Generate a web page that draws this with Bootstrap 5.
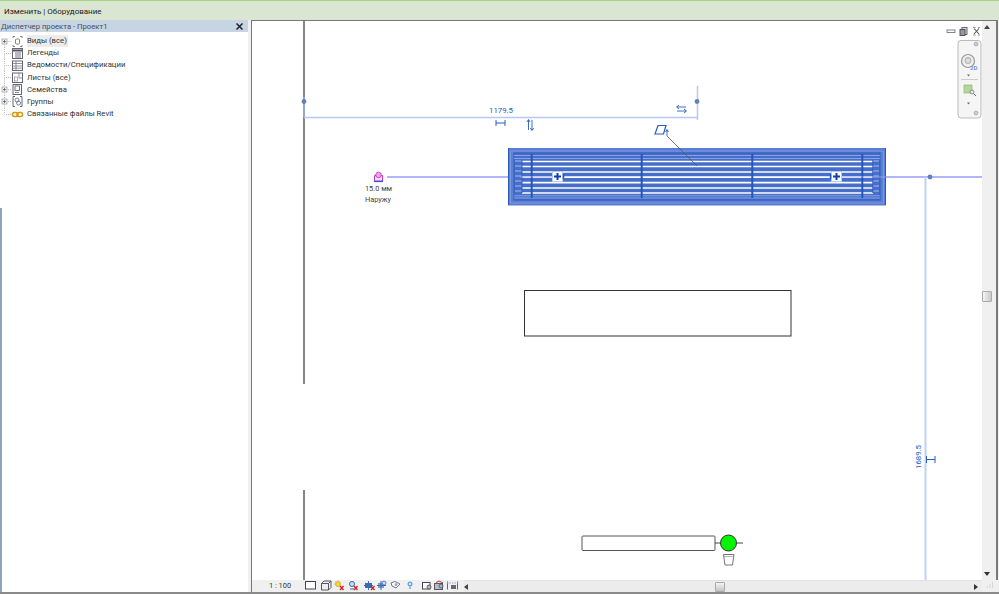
<!DOCTYPE html>
<html lang="ru">
<head>
<meta charset="utf-8">
<title>Revit</title>
<link href="https://cdn.jsdelivr.net/npm/bootstrap@5.3.0/dist/css/bootstrap.min.css" rel="stylesheet">
<style>
html,body{height:100%;overflow:hidden;background:#f0f0f0}
body{font-family:Roboto,"Noto Sans",sans-serif;font-size:8px;color:#333}
.app-root{width:999px;height:594px}
.top-line{height:1px;background:#9fd77f}
.ribbon-bar{height:19px;background:#dae6d2;font-size:8px;padding-left:4px;color:#222;line-height:21px}
.main-area{height:572px}
.tree-side{width:248px;background:#fff linear-gradient(#8fa6bf,#8fa6bf) no-repeat 0 188px/2px 100%}
.tree-head{height:12px;background:#c6d4e3;color:#45505c;font-size:7.7px;line-height:11px;padding:0 5px 0 1px}
.tree-list{padding:3px 0 0;margin:0;list-style:none}
.tree-row{height:12.17px;line-height:12px;font-size:7.75px;color:#333}
.tree-row svg{width:27px;height:13px;flex:none}
.sel-label{background:#ececec;padding-right:1px}
.side-gap{width:3px;background:#f0f0f0}
.view-frame{width:747px;border-left:1px solid #777;border-top:1px solid #777;background:#f0f0f0}
.draw-row{height:559px}
.draw-area{width:730px;height:559px;background:#fff;display:block;flex:none}
.v-scroll{width:15px;background:#f0f0f0}
.thumb-v{width:10px;height:11px;margin-top:262px;background:linear-gradient(90deg,#f4f4f4,#c9c9c9);border:1px solid #aaa;border-radius:1px}
.status-row{height:12px;background:#f0f0f0;font-size:7.4px;color:#333;line-height:12px}
.scale-text{width:52px;padding-left:17px;flex:none}
.status-svg{width:160px;height:12px;flex:none}
.h-track{width:518px;background:#ececec;border-top:1px solid #e2e2e2}
.thumb-h{width:10px;height:10px;margin-left:247px;background:linear-gradient(#f4f4f4,#c4c4c4);border:1px solid #aaa;border-radius:1px}
.end-edge{width:2px;background:#7a7a7a}
.foot-edge{height:2px;background:#8a8a8a}
.dim-text{font-size:7.8px;fill:#2a5bc0;font-family:Roboto,sans-serif}
.note-text{font-size:7.4px;fill:#444;font-family:Roboto,sans-serif}
</style>
</head>
<body>
<div class="app-root d-flex flex-column">
  <div class="top-line"></div>
  <div class="ribbon-bar">Изменить | Оборудование</div>
  <div class="main-area d-flex">
    <div class="tree-side d-flex flex-column">
      <div class="tree-head d-flex justify-content-between align-items-center">
        <span>Диспетчер проекта - Проект1</span>
        <svg width="7" height="7" viewBox="0 0 7 7"><path d="M0.5 0.5L6.5 6.5M6.5 0.5L0.5 6.5" stroke="#222" stroke-width="1.5"/></svg>
      </div>
      <ul class="tree-list">
        <li class="tree-row d-flex align-items-center">
          <svg viewBox="0 0 27 13"><path d="M4.5 6.5H12M4.500 6.5V13" fill="none" stroke="#bbb" stroke-dasharray="1 1"/><rect x="2" y="4" width="5" height="5" fill="#f4f4f4" stroke="#999" stroke-width=".7"/><path d="M3 6.5H6M4.5 5V8" stroke="#456" stroke-width=".7"/><path d="M13 3V1.500H15M20 1.500H22V3M22 10V11.500H20M15 11.500H13V10" fill="none" stroke="#666" stroke-width=".8"/><rect x="15.500" y="4" width="4" height="5" rx="1" fill="none" stroke="#777" stroke-width=".9"/></svg>
          <span class="sel-label">Виды (все)</span>
        </li>
        <li class="tree-row d-flex align-items-center">
          <svg viewBox="0 0 27 13"><path d="M4.5 0V6.5H12M4.500 6.5V13" fill="none" stroke="#bbb" stroke-dasharray="1 1"/><rect x="12.500" y="1.500" width="10" height="10" fill="#fff" stroke="#667"/><path d="M13 3.500H22" stroke="#556" stroke-width="2"/><path d="M15 6H21M15 8H21M15 10H21" stroke="#667" stroke-width=".9"/></svg>
          <span>Легенды</span>
        </li>
        <li class="tree-row d-flex align-items-center">
          <svg viewBox="0 0 27 13"><path d="M4.5 0V6.5H12M4.500 6.5V13" fill="none" stroke="#bbb" stroke-dasharray="1 1"/><rect x="12.500" y="2" width="10" height="9.500" fill="#fff" stroke="#667"/><path d="M13 4.500H22M13 7H22M13 9.200H22M16 2V11" fill="none" stroke="#778" stroke-width=".8"/></svg>
          <span>Ведомости/Спецификации</span>
        </li>
        <li class="tree-row d-flex align-items-center">
          <svg viewBox="0 0 27 13"><path d="M4.5 0V6.5H12M4.500 6.5V13" fill="none" stroke="#bbb" stroke-dasharray="1 1"/><rect x="12.500" y="2" width="10" height="9.500" fill="#fff" stroke="#667"/><path d="M19 2V7H22.500" fill="none" stroke="#778" stroke-width=".8"/><rect x="14.500" y="6" width="3" height="4" fill="none" stroke="#889" stroke-width=".7"/></svg>
          <span>Листы (все)</span>
        </li>
        <li class="tree-row d-flex align-items-center">
          <svg viewBox="0 0 27 13"><path d="M4.5 0V6.5H12M4.500 6.5V13" fill="none" stroke="#bbb" stroke-dasharray="1 1"/><rect x="2" y="4" width="5" height="5" fill="#f4f4f4" stroke="#999" stroke-width=".7"/><path d="M3 6.5H6M4.5 5V8" stroke="#456" stroke-width=".7"/><rect x="13" y="1.500" width="8.500" height="10" fill="#fff" stroke="#667"/><rect x="15" y="3" width="4.500" height="4.500" fill="none" stroke="#667" stroke-width=".9"/><path d="M15 9.500H19" stroke="#889"/></svg>
          <span>Семейства</span>
        </li>
        <li class="tree-row d-flex align-items-center">
          <svg viewBox="0 0 27 13"><path d="M4.5 0V6.5H12M4.500 6.5V13" fill="none" stroke="#bbb" stroke-dasharray="1 1"/><rect x="2" y="4" width="5" height="5" fill="#f4f4f4" stroke="#999" stroke-width=".7"/><path d="M3 6.5H6M4.5 5V8" stroke="#456" stroke-width=".7"/><path d="M15 1.500H13V11.500H15M20 1.500H22V11.500H20" fill="none" stroke="#667"/><circle cx="17" cy="5" r="2" fill="none" stroke="#778" stroke-width=".9"/><circle cx="18.500" cy="8" r="2" fill="none" stroke="#778" stroke-width=".9"/></svg>
          <span>Группы</span>
        </li>
        <li class="tree-row d-flex align-items-center">
          <svg viewBox="0 0 27 13"><path d="M4.5 0V6.5H12" fill="none" stroke="#bbb" stroke-dasharray="1 1"/><rect x="12.500" y="4.500" width="5.500" height="4" rx="2" fill="none" stroke="#d59b12" stroke-width="1.600"/><rect x="17" y="4.500" width="5.500" height="4" rx="2" fill="none" stroke="#d59b12" stroke-width="1.600"/></svg>
          <span>Связанные файлы Revit</span>
        </li>
      </ul>
    </div>
    <div class="side-gap"></div>
    <div class="view-frame d-flex flex-column">
      <div class="draw-row d-flex">
        <svg class="draw-area" viewBox="252 21 730 559" aria-label="Чертёж">
          <!-- walls -->
          <path d="M304 21V384M304 490V580" stroke="#555" stroke-width="1.400" fill="none"/>
          <path d="M304 97V117" stroke="#9db4ea" stroke-width="1.400"/>
          <!-- horizontal dimension -->
          <path d="M304 117.500H697M697.500 86V120" stroke="#b7c8f5" stroke-width="1.500" fill="none"/>
          <circle cx="304" cy="101.500" r="2.400" fill="#5f83b8"/>
          <circle cx="697" cy="101.500" r="2.400" fill="#5f83b8"/>
          <text class="dim-text" x="489" y="113">1179.5</text>
          <path d="M496 120V126M505 120V126M496 123H505" stroke="#2a5bc0" stroke-width="1" fill="none"/>
          <path d="M528.500 130V120M526.800 122L528.500 119.500L530.200 122M532 120V130M530.300 128L532 130.500L533.700 128" stroke="#2a5bc0" stroke-width=".9" fill="none"/>
          <path d="M677 107H686M679 105L676.500 107L679 109M686 111H677M684 109L686.500 111L684 113" stroke="#2a5bc0" stroke-width=".9" fill="none"/>
          <!-- connection lines -->
          <path d="M387 177H508M886 177H982" stroke="#9a9dfa" stroke-width="1.300"/>
          <path d="M925.500 177V580" stroke="#c0d0f8" stroke-width="2"/>
          <circle cx="930" cy="177" r="2.400" fill="#5f83b8"/>
          <!-- unit -->
          <rect x="508" y="148" width="378" height="57.500" fill="#5a7fd2"/>
          <path d="M508.500 148V205M885.500 148V205" stroke="#2a58bd" stroke-width="1"/>
          <path d="M510.500 151H883.500V203H510.500Z" fill="none" stroke="#86a0e0" stroke-width=".8"/>
          <rect x="514" y="153" width="366" height="47" fill="#466ecb" stroke="#2f5cc2"/>
          <path d="M514 155.500H880M514 158.500H880M514 195.800H880M514 198H880" stroke="#9ab0e6" stroke-width=".8"/>
          <path d="M522 161.500H873M522 166.500H873M522 172H873M522 177.200H873M522 182.700H873M522 188H873M522 193H873" stroke="#fff" stroke-width="1.700"/>
          <path d="M515 161H522M515 166H522M515 171H522M515 176H522M515 181H522M515 186H522M515 191H522M873 161H879M873 166H879M873 171H879M873 176H879M873 181H879M873 186H879M873 191H879" stroke="#a7b9ea" stroke-width="1"/>
          <path d="M522 160V193M872.800 160V193" stroke="#2f5cc2" stroke-width="1"/>
          <path d="M531.700 154V198M641.700 154V198M752.300 154V198M862.300 154V198" stroke="#2456bd" stroke-width="2"/>
          <path d="M520 177H552M842 177H886" stroke="#a5a8fa" stroke-width="1" opacity=".8"/>
          <!-- grip controls -->
          <g>
            <rect x="552.500" y="171.500" width="10" height="10" fill="#fff" stroke="#b8c8ee"/>
            <path d="M557.500 173V180M554 176.500H561" stroke="#0e3fb0" stroke-width="2"/>
            <path d="M563.500 174V179" stroke="#2456bd" stroke-width="1.500"/>
          </g>
          <g>
            <rect x="831.500" y="171.500" width="10" height="10" fill="#fff" stroke="#b8c8ee"/>
            <path d="M836.500 173V180M833 176.500H840" stroke="#0e3fb0" stroke-width="2"/>
            <path d="M830.500 174V179" stroke="#2456bd" stroke-width="1.500"/>
          </g>
          <!-- elevation handle -->
          <path d="M658 125.500H666L663.500 134H655Z" fill="none" stroke="#2a5bc0" stroke-width="1.200"/>
          <path d="M667 136V130M665.500 132L667 129.500L668.500 132" stroke="#2a5bc0" stroke-width=".9" fill="none"/>
          <path d="M667 136L697 166" stroke="#555" stroke-width=".8"/>
          <!-- magenta connector -->
          <path d="M374.500 175.500V181H382.500V175.500Z" fill="#f8e4f8" stroke="#b43ac4" stroke-width="1"/>
          <circle cx="378.500" cy="175" r="2.800" fill="#f0a0e8" stroke="#c030c0" stroke-width=".8"/>
          <path d="M374 181.500H383" stroke="#3a4fd0" stroke-width="1.200"/>
          <text class="note-text" x="378.500" y="191" text-anchor="middle">15.0 мм</text>
          <text class="note-text" x="378" y="202" text-anchor="middle">Наружу</text>
          <!-- boxes -->
          <rect x="524.500" y="290.500" width="266.500" height="45.500" fill="#fff" stroke="#333"/>
          <rect x="582" y="536" width="133" height="14.500" rx="1" fill="#fff" stroke="#555"/>
          <path d="M715 543H720M737 543H743" stroke="#444"/>
          <circle cx="728.500" cy="543" r="8" fill="#00f500" stroke="#333"/>
          <path d="M723.500 554.500H734L732.500 565H725Z" fill="#fff" stroke="#666" stroke-width=".9"/>
          <path d="M723.500 556.500H734" stroke="#888" stroke-width=".6"/>
          <!-- vertical dimension -->
          <text class="dim-text" transform="translate(921 469) rotate(-90)">1689.5</text>
          <path d="M926.500 456V463M935 456V463M926.500 459.500H935" stroke="#2a5bc0" stroke-width="1" fill="none"/>
          <!-- view controls -->
          <rect x="947" y="30" width="8" height="2.500" fill="#fff" stroke="#666" stroke-width=".8"/>
          <rect x="962" y="27.500" width="5" height="7" fill="#ddd" stroke="#556" stroke-width=".9"/>
          <rect x="960" y="29.500" width="5" height="6" fill="#999" stroke="#445" stroke-width=".9"/>
          <path d="M974 28.500L979 34M979 28.500L974 34" stroke="#555" stroke-width="1.100"/>
          <path d="M973 27.500H975.500M978 27.500H980M973 35H975.500M978 35H980" stroke="#777" stroke-width=".8"/>
          <rect x="958" y="40.500" width="23" height="77.500" rx="3" fill="#f5f5f5" stroke="#bbb"/>
          <circle cx="976" cy="44" r="2" fill="#ccc" stroke="#999" stroke-width=".6"/>
          <circle cx="976" cy="113" r="2" fill="#ccc" stroke="#999" stroke-width=".6"/>
          <circle cx="968" cy="61" r="6.500" fill="#eee" stroke="#999" stroke-width="1.200"/>
          <circle cx="968" cy="60.500" r="3" fill="#ddd" stroke="#aaa"/>
          <text x="970" y="70" font-size="6" font-weight="700" fill="#6a97d8" font-family="Roboto,sans-serif">2D</text>
          <path d="M967 74.500H970L968.500 76.500Z" fill="#666"/>
          <path d="M961 79.500H978" stroke="#ccc"/>
          <rect x="964" y="85" width="8" height="8" fill="#b3d89a" stroke="#8db874" stroke-width=".7"/>
          <circle cx="972" cy="92" r="2" fill="#eee" stroke="#777" stroke-width=".8"/>
          <path d="M973.500 93.500L976 96" stroke="#666" stroke-width="1"/>
          <path d="M967 102.500H970L968.500 104.500Z" fill="#666"/>
        </svg>
        <div class="v-scroll d-flex flex-column align-items-center">
          <svg class="mt-1 me-1" width="6" height="4" viewBox="0 0 6 4"><path d="M0 4H6L3 0Z" fill="#444"/></svg>
          <div class="thumb-v me-1"></div>
          <svg class="mt-auto mb-1 me-1" width="6" height="4" viewBox="0 0 6 4"><path d="M0 0H6L3 4Z" fill="#333"/></svg>
        </div>
        <div class="end-edge"></div>
      </div>
      <div class="status-row d-flex">
        <span class="scale-text">1 : 100</span>
        <svg class="status-svg" viewBox="304 580 160 12">
          <rect x="305.500" y="581.500" width="10" height="7.500" fill="#fff" stroke="#445"/>
          <path d="M321.500 583.500H328.500V590H321.500ZM321.500 583.500L324 581H331V587.500L328.500 590M328.500 583.500L331 581" fill="#eee" stroke="#445" stroke-width=".9"/>
          <circle cx="338" cy="584" r="2.500" fill="#f5d547" stroke="#c9a417" stroke-width=".8"/>
          <path d="M338 580.500V581M334.500 584H335M335.500 581.500L336 582" stroke="#c9a417"/>
          <path d="M340 586L343.500 590M343.500 586L340 590" stroke="#d02020" stroke-width="1.300"/>
          <circle cx="352" cy="584" r="2.500" fill="#cde" stroke="#2a6bc0"/>
          <path d="M350 589H354" stroke="#2a6bc0"/>
          <path d="M354 586L357.500 590M357.500 586L354 590" stroke="#d02020" stroke-width="1.300"/>
          <rect x="365" y="583" width="7" height="5" fill="#3a6ab0"/>
          <path d="M364 585.500H373M368.500 581V590" stroke="#3a6ab0"/>
          <path d="M371 586L374.500 590M374.500 586L371 590" stroke="#d02020" stroke-width="1.300"/>
          <rect x="378" y="583" width="6" height="5" fill="#7a9ad0"/>
          <path d="M381 581V590M377 585.500H386" stroke="#3a6ab0"/>
          <circle cx="384" cy="583" r="2" fill="#cde" stroke="#3a6ab0" stroke-width=".8"/>
          <path d="M391 583L395 581.500L400 584L396 588L392 586Z" fill="#fff" stroke="#667" stroke-width=".9"/>
          <circle cx="396" cy="584.500" r="1.500" fill="#9ab"/>
          <circle cx="410" cy="584" r="2" fill="#cfe6ff" stroke="#3a8ad0"/>
          <path d="M410 586.500V589" stroke="#3a8ad0"/>
          <rect x="422.500" y="582.500" width="7.500" height="6.500" fill="#fff" stroke="#445"/>
          <circle cx="429" cy="587" r="2" fill="#bbb" stroke="#445" stroke-width=".8"/>
          <rect x="434.500" y="583.500" width="8" height="6" fill="#bbb" stroke="#556"/>
          <path d="M436 582.500L439 581L443 583" fill="none" stroke="#c03030"/>
          <circle cx="441" cy="586" r="2" fill="#9bc" stroke="#345" stroke-width=".7"/>
          <path d="M447.500 581.500V589.500M457.500 581.500V589.500" stroke="#667"/>
          <path d="M447 583H458" stroke="#9ab" stroke-dasharray="1.500 1"/>
          <rect x="451" y="585" width="5" height="4" fill="#667"/>
        </svg>
        <div class="h-track d-flex align-items-center">
          <svg width="4" height="6" viewBox="0 0 4 6"><path d="M4 0V6L0 3Z" fill="#444"/></svg>
          <div class="thumb-h"></div>
          <svg class="ms-auto me-1" width="4" height="6" viewBox="0 0 4 6"><path d="M0 0V6L4 3Z" fill="#333"/></svg>
        </div>
        <div class="flex-grow-1 d-flex align-items-end justify-content-center pb-1">
          <svg width="8" height="6" viewBox="0 0 8 6"><path d="M6 1h1M3.500 3h1M6 3h1M1 5h1M3.500 5h1M6 5h1" stroke="#bbb"/></svg>
        </div>
      </div>
    </div>
  </div>
  <div class="foot-edge"></div>
</div>
<script src="https://cdn.jsdelivr.net/npm/bootstrap@5.3.0/dist/js/bootstrap.bundle.min.js"></script>
</body>
</html>
